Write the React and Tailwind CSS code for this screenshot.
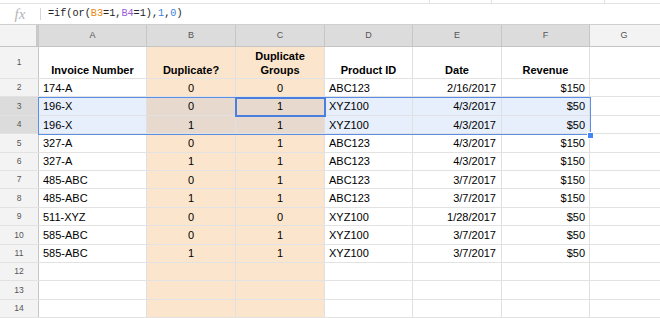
import React from 'react';

const colW = ['w-[108px]', 'w-[89px]', 'w-[89px]', 'w-[88px]', 'w-[89px]', 'w-[88px]'];
const letters = ['A', 'B', 'C', 'D', 'E', 'F'];
const align = ['justify-start pl-[4px]', 'justify-center', 'justify-center', 'justify-start pl-[4px]', 'justify-end pr-[5px]', 'justify-end pr-[4px]'];

const data = [
    ['174-A', '0', '0', 'ABC123', '2/16/2017', '$150'],
    ['196-X', '0', '1', 'XYZ100', '4/3/2017', '$50'],
    ['196-X', '1', '1', 'XYZ100', '4/3/2017', '$50'],
    ['327-A', '0', '1', 'ABC123', '4/3/2017', '$150'],
    ['327-A', '1', '1', 'ABC123', '4/3/2017', '$150'],
    ['485-ABC', '0', '1', 'ABC123', '3/7/2017', '$150'],
    ['485-ABC', '1', '1', 'ABC123', '3/7/2017', '$150'],
    ['511-XYZ', '0', '0', 'XYZ100', '1/28/2017', '$50'],
    ['585-ABC', '0', '1', 'XYZ100', '3/7/2017', '$50'],
    ['585-ABC', '1', '1', 'XYZ100', '3/7/2017', '$50'],
    ['', '', '', '', '', ''],
    ['', '', '', '', '', ''],
    ['', '', '', '', '', ''],
];

const cellBg = (col, selected) => {
    const orange = col === 1 || col === 2;
    if (selected) return orange ? 'bg-[#e8d9cf]' : 'bg-[#e8effc]';
    return orange ? 'bg-[#fce5cd]' : 'bg-white';
};

const App = () => {
    return (
        <div className="w-[660px] h-[318px] overflow-hidden bg-white font-['Liberation_Sans',Arial,sans-serif] text-black">
            {/* toolbar remnant */}
            <div className="h-[4px] border-b border-[#e3e3e3] flex">
                <div className="w-[430px] border-r border-[#e3e3e3]" />
                <div className="w-[62px] border-r border-[#e3e3e3]" />
                <div className="w-[113px] border-r border-[#e3e3e3]" />
            </div>

            {/* formula bar */}
            <div className="h-[21px] flex items-center border-b border-[#cfcfcf]">
                <div className="w-[40px] h-full flex items-center justify-center">
                    <span className="font-['Liberation_Serif',serif] italic text-[15px] text-[#b5b5b5] leading-none">fx</span>
                </div>
                <div className="w-px h-[12px] bg-[#d6d6d6]" />
                <div className="pl-[7px] font-['Liberation_Mono',monospace] text-[10.2px] text-[#222] leading-none">
                    =if(or(<span className="text-[#e8870e]">B3</span>=1,<span className="text-[#9a5bd6]">B4</span>=1),<span className="text-[#3d7fd8]">1</span>,<span className="text-[#3d7fd8]">0</span>)
                </div>
            </div>

            {/* column headers */}
            <div className="h-[22px] flex border-b border-[#c4c4c4]">
                <div className="w-[39px] shrink-0 bg-[#f3f3f3] border-r-[3px] border-[#c9c9c9]" />
                {letters.map((l, i) => (
                    <div key={l} className={`${colW[i]} shrink-0 bg-[#dcdcdc] border-r border-[#c6c6c6] flex items-center justify-center text-[9px] text-[#555]`}>
                        {l}
                    </div>
                ))}
                <div className="flex-1 bg-[#f3f3f3] flex items-center justify-center text-[9px] text-[#555] pr-[2px]">G</div>
            </div>

            <div className="relative">
                {/* header row 1 */}
                <div className="h-[32px] flex border-b border-[#e2e2e2]">
                    <div className="w-[39px] shrink-0 bg-[#f3f3f3] border-r border-[#c6c6c6] flex items-center justify-center text-[8.5px] text-[#555]">1</div>
                    {['Invoice Number', 'Duplicate?', 'Duplicate Groups', 'Product ID', 'Date', 'Revenue'].map((h, i) => (
                        <div key={h} className={`${colW[i]} shrink-0 ${cellBg(i, false)} border-r border-[#e0e0e0] flex items-end justify-center text-center pb-[1px] text-[11px] font-bold leading-[14px] ${i === 2 ? 'px-[12px]' : ''}`}>
                            {h}
                        </div>
                    ))}
                    <div className="flex-1" />
                </div>

                {data.map((row, r) => {
                    const n = r + 2;
                    const sel = n === 3 || n === 4;
                    return (
                        <div key={n} className="h-[18.42px] flex border-b border-[#e2e2e2]">
                            <div className={`w-[39px] shrink-0 ${sel ? 'bg-[#dcdcdc]' : 'bg-[#f3f3f3]'} border-r border-[#c6c6c6] flex items-center justify-center text-[8.5px] text-[#555]`}>
                                {n}
                            </div>
                            {row.map((v, i) => (
                                <div key={i} className={`${colW[i]} shrink-0 ${cellBg(i, sel)} border-r border-[#e0e0e0] flex items-center ${align[i]} text-[11px] leading-none pt-[1px]`}>
                                    {v}
                                </div>
                            ))}
                            <div className="flex-1" />
                        </div>
                    );
                })}

                {/* selection range A3:F4 */}
                <div className="absolute top-[50px] left-[38px] w-[553px] h-[38px] border border-[#5b8ee6] pointer-events-none" />
                {/* active cell C3 */}
                <div className="absolute top-[50px] left-[235px] w-[91px] h-[20px] border-2 border-[#4a7fe0] pointer-events-none" />
                {/* fill handle */}
                <div className="absolute top-[85px] left-[587px] w-[7px] h-[7px] bg-[#4285f4] border border-white" />
            </div>
        </div>
    );
};

export default App;
